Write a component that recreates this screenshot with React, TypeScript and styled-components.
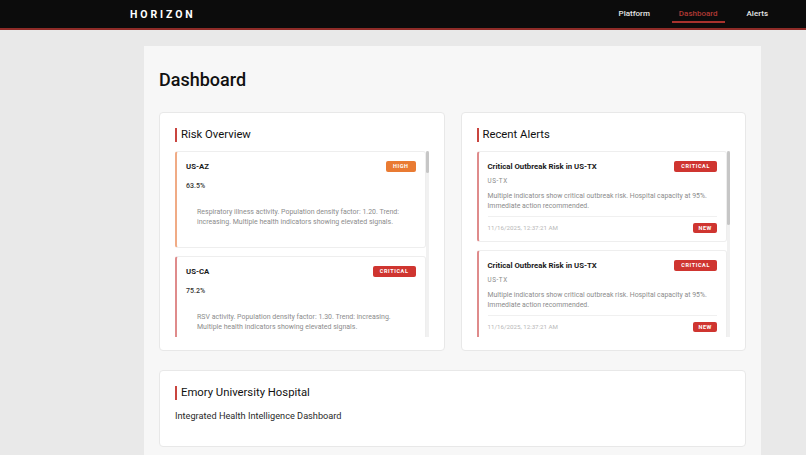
import React from 'react'
import styled, { createGlobalStyle } from 'styled-components'

type Level = 'HIGH' | 'CRITICAL' | 'MODERATE'

interface RiskState {
  region: string
  level: Level
  score: string
  text: string
}

interface AlertState {
  title: string
  region: string
  text: string
  time: string
}

const risks: RiskState[] = [
  { region: 'US-AZ', level: 'HIGH', score: '63.5%', text: 'Respiratory illness activity. Population density factor: 1.20. Trend: increasing. Multiple health indicators showing elevated signals.' },
  { region: 'US-CA', level: 'CRITICAL', score: '75.2%', text: 'RSV activity. Population density factor: 1.30. Trend: increasing. Multiple health indicators showing elevated signals.' },
  { region: 'US-TX', level: 'CRITICAL', score: '81.4%', text: 'Influenza activity. Population density factor: 1.25. Trend: increasing. Multiple health indicators showing elevated signals.' },
  { region: 'US-FL', level: 'HIGH', score: '61.8%', text: 'COVID-19 activity. Population density factor: 1.15. Trend: stable. Multiple health indicators showing elevated signals.' },
  { region: 'US-NY', level: 'HIGH', score: '66.0%', text: 'Respiratory illness activity. Population density factor: 1.40. Trend: increasing. Multiple health indicators showing elevated signals.' },
  { region: 'US-GA', level: 'HIGH', score: '58.9%', text: 'Influenza activity. Population density factor: 1.10. Trend: increasing. Multiple health indicators showing elevated signals.' },
  { region: 'US-IL', level: 'MODERATE', score: '47.3%', text: 'RSV activity. Population density factor: 1.05. Trend: stable. Some health indicators showing elevated signals.' },
  { region: 'US-WA', level: 'MODERATE', score: '44.1%', text: 'Respiratory illness activity. Population density factor: 1.00. Trend: decreasing. Some health indicators showing elevated signals.' },
]

const alerts: AlertState[] = Array.from({ length: 3 }, () => ({
  title: 'Critical Outbreak Risk in US-TX',
  region: 'US-TX',
  text: 'Multiple indicators show critical outbreak risk. Hospital capacity at 95%. Immediate action recommended.',
  time: '11/16/2025, 12:37:21 AM',
}))

const levelColor: Record<Level, string> = {
  HIGH: '#e97b33',
  CRITICAL: '#cf3530',
  MODERATE: '#d9a531',
}

const edgeColor: Record<Level, string> = {
  HIGH: '#f0ab85',
  CRITICAL: '#df8b8b',
  MODERATE: '#ebcf8f',
}

const GlobalStyle = createGlobalStyle`
  body {
    margin: 0;
    background: #e9e9e9;
    font-family: Roboto, "Liberation Sans", Arial, sans-serif;
    color: #1b1b1b;
  }
`

const Header = styled.header`
  height: 28px;
  background: #0c0c0c;
  border-bottom: 2px solid #8f2c28;
  display: flex;
  align-items: center;
  justify-content: space-between;
  padding: 0 31px 0 130px;
`

const Logo = styled.div`
  color: #fff;
  font-size: 10.5px;
  font-weight: 700;
  letter-spacing: 2.9px;
`

const Nav = styled.nav`
  display: flex;
  gap: 15px;
`

const NavLink = styled.a<{ $active?: boolean }>`
  display: block;
  padding: 3px 7px 2px;
  line-height: 10px;
  font-size: 8px;
  font-weight: 500;
  color: ${p => (p.$active ? '#b13a35' : '#e6e6e6')};
  border-bottom: 2px solid ${p => (p.$active ? '#a8322d' : 'transparent')};
  text-decoration: none;
`

const Main = styled.main`
  margin: 16px 45px 0 144px;
  background: #f7f7f7;
  padding: 22px 15px 20px;
  min-height: 420px;
`

const PageTitle = styled.h1`
  margin: 0 0 20px;
  font-size: 18px;
  line-height: 24px;
  font-weight: 500;
  color: #111;
`

const Grid = styled.div`
  display: grid;
  grid-template-columns: 1fr 1fr;
  gap: 16px;
  margin-bottom: 19px;
`

const Card = styled.section`
  background: #fff;
  border: 1px solid #e8e8e8;
  border-radius: 4px;
  padding: 15px 15px 13px;
`

const CardTitle = styled.h2`
  margin: 0;
  font-size: 11.3px;
  line-height: 14px;
  font-weight: 400;
  color: #111;
  border-left: 2px solid #c9453f;
  padding-left: 4px;
`

const ScrollArea = styled.div`
  margin-top: 9px;
  height: 186px;
  display: flex;
`

const List = styled.div`
  flex: 1;
  min-width: 0;
  overflow: hidden;
  display: flex;
  flex-direction: column;
  gap: 8px;
`

const Track = styled.div`
  width: 3px;
  background: #f1f1f1;
`

const Thumb = styled.div<{ $size: number }>`
  height: ${p => p.$size}px;
  background: #c6c6c6;
  border-radius: 2px;
`

const Item = styled.div<{ $edge: string; $tight?: boolean }>`
  flex-shrink: 0;
  background: #fff;
  border: 1px solid #eeeeee;
  border-left: 2px solid ${p => p.$edge};
  border-radius: 3px;
  padding: 9px 9px ${p => (p.$tight ? '8px' : '10px')} 9px;
`

const ItemHead = styled.div`
  display: flex;
  justify-content: space-between;
  align-items: center;
`

const ItemName = styled.div`
  font-size: 7.8px;
  font-weight: 700;
  color: #1a1a1a;
`

const Badge = styled.span<{ $color: string; $small?: boolean }>`
  display: inline-block;
  background: ${p => p.$color};
  color: #fff;
  font-size: 5.5px;
  font-weight: 700;
  letter-spacing: 0.6px;
  line-height: ${p => (p.$small ? '10px' : '11px')};
  padding: 0 ${p => (p.$small ? '5px' : '7px')};
  border-radius: 2px;
`

const Score = styled.div`
  margin-top: 9px;
  font-size: 7px;
  line-height: 10px;
  font-weight: 500;
  color: #333;
`

const RiskText = styled.p`
  margin: 9px 0 0;
  padding: 8px 11px 10px;
  font-size: 7px;
  line-height: 9.5px;
  color: #8c8c8c;
`

const AlertRegion = styled.div`
  margin-top: 5px;
  font-size: 6.3px;
  line-height: 8px;
  letter-spacing: 0.6px;
  color: #8a8a8a;
`

const AlertText = styled.p`
  margin: 6px 0 0;
  font-size: 6.9px;
  line-height: 10px;
  color: #8c8c8c;
`

const AlertFoot = styled.div`
  margin-top: 5px;
  padding-top: 6px;
  border-top: 1px solid #f0f0f0;
  display: flex;
  justify-content: space-between;
  align-items: center;
`

const AlertTime = styled.span`
  font-size: 6.2px;
  color: #b8b8b8;
`

const InfoCard = styled(Card)`
  padding-bottom: 24px;
`

const InfoText = styled.p`
  margin: 10px 0 0;
  font-size: 9.2px;
  line-height: 12px;
  color: #2a2a2a;
`

function RiskItem({ risk }: { risk: RiskState }) {
  return (
    <Item $edge={edgeColor[risk.level]}>
      <ItemHead>
        <ItemName>{risk.region}</ItemName>
        <Badge $color={levelColor[risk.level]}>{risk.level}</Badge>
      </ItemHead>
      <Score>{risk.score}</Score>
      <RiskText>{risk.text}</RiskText>
    </Item>
  )
}

function AlertItem({ alert }: { alert: AlertState }) {
  return (
    <Item $edge="#df8b8b" $tight>
      <ItemHead>
        <ItemName>{alert.title}</ItemName>
        <Badge $color={levelColor.CRITICAL}>CRITICAL</Badge>
      </ItemHead>
      <AlertRegion>{alert.region}</AlertRegion>
      <AlertText>{alert.text}</AlertText>
      <AlertFoot>
        <AlertTime>{alert.time}</AlertTime>
        <Badge $color={levelColor.CRITICAL} $small>NEW</Badge>
      </AlertFoot>
    </Item>
  )
}

export default function App() {
  return (
    <>
      <GlobalStyle />
      <Header>
        <Logo>HORIZON</Logo>
        <Nav>
          <NavLink href="#">Platform</NavLink>
          <NavLink href="#" $active>Dashboard</NavLink>
          <NavLink href="#">Alerts</NavLink>
        </Nav>
      </Header>

      <Main>
        <PageTitle>Dashboard</PageTitle>
        <Grid>
          <Card>
            <CardTitle>Risk Overview</CardTitle>
            <ScrollArea>
              <List>
                { risks.map(r => <RiskItem key={r.region} risk={r} />) }
              </List>
              <Track><Thumb $size={22} /></Track>
            </ScrollArea>
          </Card>
          <Card>
            <CardTitle>Recent Alerts</CardTitle>
            <ScrollArea>
              <List>
                { alerts.map((a, i) => <AlertItem key={i} alert={a} />) }
              </List>
              <Track><Thumb $size={74} /></Track>
            </ScrollArea>
          </Card>
        </Grid>
        <InfoCard>
          <CardTitle>Emory University Hospital</CardTitle>
          <InfoText>Integrated Health Intelligence Dashboard</InfoText>
        </InfoCard>
      </Main>
    </>
  )
}
